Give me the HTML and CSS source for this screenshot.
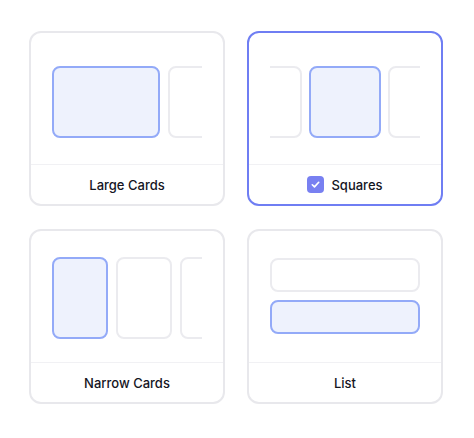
FILE: index.html
```html
<!DOCTYPE html>
<html>
<head>
    <title>Layout Picker</title>
    <link rel="stylesheet" href="styles.css">
</head>
<body>
    <div class="layout-grid">
        <div class="layout-option">
            <div class="preview">
                <div class="track">
                    <div class="shape large active"></div>
                    <div class="shape large"></div>
                </div>
            </div>
            <div class="option-label">Large Cards</div>
        </div>

        <div class="layout-option selected">
            <div class="preview">
                <div class="track centered">
                    <div class="shape square"></div>
                    <div class="shape square active"></div>
                    <div class="shape square"></div>
                </div>
            </div>
            <div class="option-label">
                <span class="check">
                    <svg width="11" height="11" viewBox="0 0 12 12"><path d="M2.5 6.3l2.4 2.3 4.6-5" fill="none" stroke="#fff" stroke-width="1.8" stroke-linecap="round" stroke-linejoin="round"/></svg>
                </span>
                Squares
            </div>
        </div>

        <div class="layout-option">
            <div class="preview narrow-preview">
                <div class="track">
                    <div class="shape narrow active"></div>
                    <div class="shape narrow"></div>
                    <div class="shape narrow"></div>
                </div>
            </div>
            <div class="option-label">Narrow Cards</div>
        </div>

        <div class="layout-option">
            <div class="preview list">
                <div class="track stacked">
                    <div class="shape row"></div>
                    <div class="shape row active"></div>
                </div>
            </div>
            <div class="option-label">List</div>
        </div>
    </div>
</body>
</html>
```

FILE: styles.css
```css
body {
    margin: 0;
    padding: 31px 29px;
    background: #ffffff;
    font-family: Inter, "Noto Sans", sans-serif;
}

.layout-grid {
    display: grid;
    grid-template-columns: 196px 196px;
    column-gap: 22px;
    row-gap: 23px;
}

.layout-option {
    box-sizing: border-box;
    height: 175px;
    border: 2px solid #e8e8ec;
    border-radius: 12px;
    display: flex;
    flex-direction: column;
    overflow: hidden;
}

.layout-option.selected {
    border-color: #6f7ef3;
}

.preview {
    height: 132px;
    box-sizing: border-box;
    padding: 6px 21px 0;
    display: flex;
    align-items: center;
    border-bottom: 1px solid #f1f1f4;
}

.preview.narrow-preview {
    padding-top: 2px;
}

.preview.list {
    padding: 0 21px 2px;
}

.track {
    width: 152px;
    display: flex;
    align-items: center;
    gap: 8px;
    overflow: hidden;
}

.track.centered {
    justify-content: center;
    gap: 7px;
}

.track.stacked {
    flex-direction: column;
}

.shape {
    flex-shrink: 0;
    box-sizing: border-box;
    border: 2px solid #ebebef;
    border-radius: 8px;
    background: #ffffff;
}

.shape.active {
    border-color: #93aaf8;
    background: #eef2fd;
}

.large {
    width: 108px;
    height: 72px;
}

.square {
    width: 72px;
    height: 72px;
}

.narrow {
    width: 56px;
    height: 82px;
}

.row {
    width: 150px;
    height: 34px;
}

.option-label {
    flex: 1;
    display: flex;
    align-items: center;
    justify-content: center;
    gap: 7px;
    font-size: 13px;
    font-weight: 500;
    color: #15151e;
}

.check {
    width: 17px;
    height: 17px;
    border-radius: 4px;
    background: #7880f1;
    display: flex;
    align-items: center;
    justify-content: center;
}
```
